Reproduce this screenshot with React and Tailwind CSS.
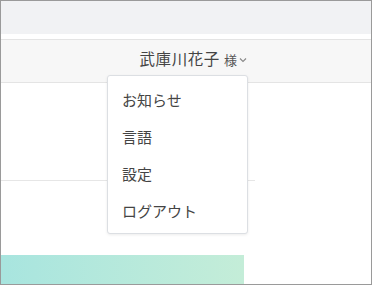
export default function App() {
  const items = ['お知らせ', '言語', '設定', 'ログアウト']

  return (
    <div className="relative w-[372px] h-[285px] overflow-hidden border border-[#9a9a9a] bg-white font-['Noto_Sans_CJK_JP',sans-serif] text-[#444]">
      {/* top band */}
      <div className="h-[33px] bg-[#f1f2f4]" />
      <div className="h-[5px] bg-white" />

      {/* header bar */}
      <div className="flex h-[44px] items-center justify-end border-y border-[#e4e4e4] bg-[#f7f7f7] pr-[124px] pb-[4px]">
        <div className="flex items-center">
          <span className="text-[15.5px] leading-none tracking-[0.6px]">武庫川花子</span>
          <span className="ml-[4px] text-[13px] leading-none text-[#555]">様</span>
          <svg width="8" height="6" viewBox="0 0 8 6" className="ml-[2px] mt-[2px]">
            <path d="M1 1.5 L4 4.5 L7 1.5" fill="none" stroke="#888" strokeWidth="1.1" />
          </svg>
        </div>
      </div>

      {/* content */}
      <div className="h-[97px]" />
      <div className="w-[254px] border-t border-[#e6e6e6]" />
      <div className="h-[74px]" />
      <div className="h-[29px] w-[243px] bg-gradient-to-r from-[#a8e5df] to-[#c4edd8]" />

      {/* dropdown */}
      <div className="absolute left-[106px] top-[74px] w-[141px] h-[159px] rounded-[3px] border border-[#dcdfe3] bg-white shadow-[0_1px_3px_rgba(0,0,0,0.08)] pt-[5px]">
        {items.map((t) => (
          <div key={t} className="flex h-[37px] items-center pl-[14px] text-[15px] leading-none">
            {t}
          </div>
        ))}
      </div>
    </div>
  )
}
